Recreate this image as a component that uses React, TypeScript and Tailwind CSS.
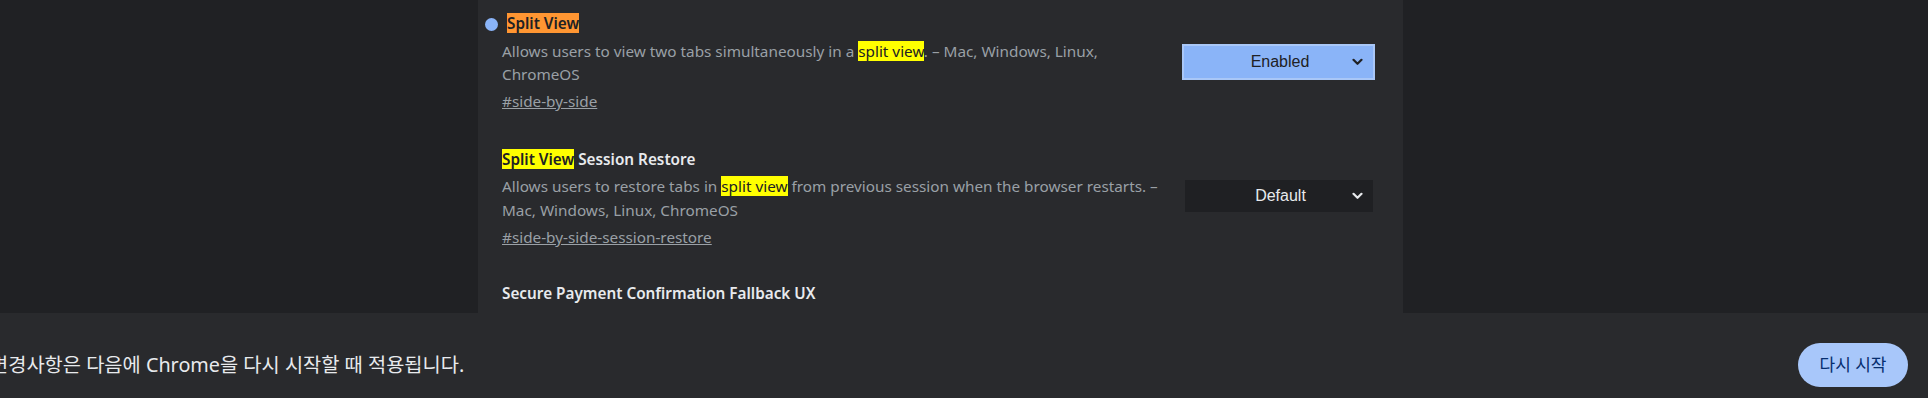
import React from "react";

const Chevron = ({ color }: { color: string }) => (
  <svg width="11" height="8" viewBox="0 0 11 8" className="shrink-0">
    <path d="M1.5 1.8 L5.5 5.8 L9.5 1.8" fill="none" stroke={color} strokeWidth="2.2" strokeLinecap="round" strokeLinejoin="round" />
  </svg>
);

export default function App() {
  return (
    <div className="w-[1928px] h-[398px] overflow-hidden bg-[#202124] flex flex-col" style={{ fontFamily: '"Noto Sans", "Noto Sans CJK KR", sans-serif' }}>
      <div className="h-[313px] shrink-0 flex">
        <div className="ml-[478px] w-[925px] h-full bg-[#292a2d] pt-[11px] flex flex-col overflow-hidden">
          {/* Entry 1 */}
          <div className="flex items-center pl-[24px] pr-[28px]">
            <div className="flex-1 flex flex-col">
              <div className="flex items-center ml-[-17px] gap-[9px] h-[24px]">
                <span className="w-[13px] h-[13px] rounded-full bg-[#8ab4f8] mt-[3px]" />
                <span className="text-[15.3px] leading-[24px] font-semibold text-[#202124]"><span className="bg-[#ff9632]">Split View</span></span>
              </div>
              <div className="mt-[5px] text-[15.3px] leading-[23px] text-[#9aa0a6] whitespace-nowrap">
                Allows users to view two tabs simultaneously in a <span className="bg-[#ffff00] text-[#202124]">split view</span>. – Mac, Windows, Linux,
                <br />
                ChromeOS
              </div>
              <div className="mt-[3px] text-[15.3px] leading-[24px] text-[#9aa0a6] underline whitespace-nowrap">#side-by-side</div>
            </div>
            <div className="w-[193px] h-[36px] border-2 border-[#a9c7f7] bg-[#8ab4f8] flex items-center justify-end pr-[10px]" style={{ fontFamily: '"Liberation Sans", Arial, sans-serif' }}>
              <span className="flex-1 text-center text-[16px] text-[#202124] pl-[24px]">Enabled</span>
              <Chevron color="#202124" />
            </div>
          </div>
          {/* Entry 2 */}
          <div className="mt-[34px] flex items-center pl-[24px] pr-[30px]">
            <div className="flex-1 flex flex-col">
              <div className="h-[24px] text-[15.3px] leading-[24px] font-semibold text-[#e8eaed] whitespace-nowrap">
                <span className="bg-[#ffff00] text-[#202124]">Split View</span> Session Restore
              </div>
              <div className="mt-[3px] text-[15.3px] leading-[24px] text-[#9aa0a6] whitespace-nowrap">
                Allows users to restore tabs in <span className="bg-[#ffff00] text-[#202124]">split view</span> from previous session when the browser restarts. –
                <br />
                Mac, Windows, Linux, ChromeOS
              </div>
              <div className="mt-[3px] text-[15.3px] leading-[24px] text-[#9aa0a6] underline whitespace-nowrap">#side-by-side-session-restore</div>
            </div>
            <div className="w-[188px] h-[32px] bg-[#1f2023] flex items-center pr-[10px] mb-[4px]" style={{ fontFamily: '"Liberation Sans", Arial, sans-serif' }}>
              <span className="flex-1 text-center text-[16px] text-[#e8eaed] pl-[24px]">Default</span>
              <Chevron color="#e8eaed" />
            </div>
          </div>
          {/* Entry 3 */}
          <div className="mt-[32px] flex items-center pl-[24px] pr-[30px]">
            <div className="h-[24px] text-[15.3px] leading-[24px] font-semibold text-[#e8eaed] whitespace-nowrap">Secure Payment Confirmation Fallback UX</div>
          </div>
        </div>
      </div>
      <div className="h-[85px] shrink-0 bg-[#292a2d] flex items-center pt-[19px] pr-[20px]">
        <div className="flex-1 ml-[-10px] text-[19.8px] text-[#e8eaed] whitespace-nowrap">변경사항은 다음에 Chrome을 다시 시작할 때 적용됩니다.</div>
        <div className="w-[110px] h-[44px] rounded-full bg-[#a8c7fa] flex items-center justify-center text-[17px] text-[#062e6f]">다시 시작</div>
      </div>
    </div>
  );
}
